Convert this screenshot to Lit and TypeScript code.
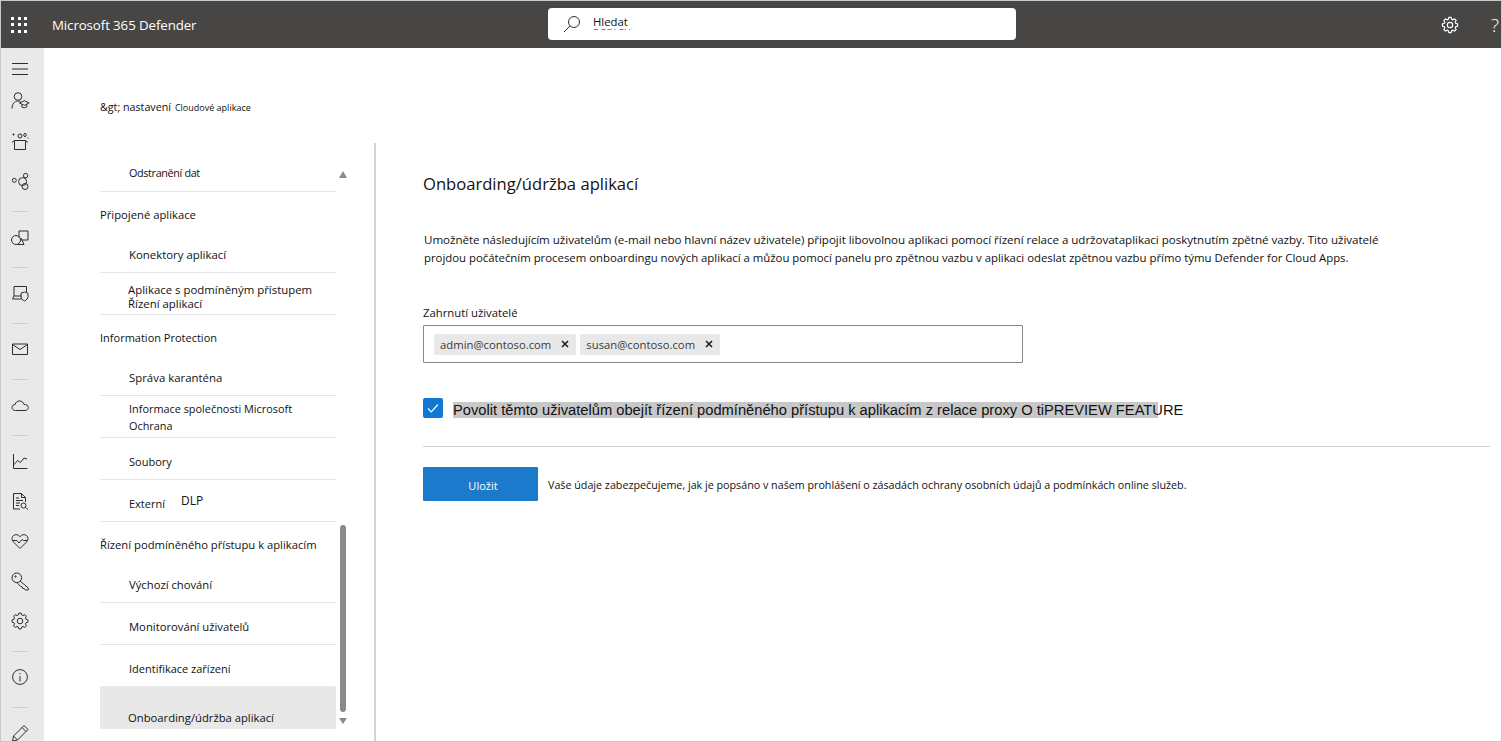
import { LitElement, html, css, svg } from "lit";
import { customElement } from "lit/decorators.js";

function gear(cx: number, cy: number, ro: number, ri: number, n: number) {
  const pts: string[] = [];
  for (let i = 0; i < n; i++) {
    const a = (i / n) * Math.PI * 2;
    const w = (Math.PI / n) * 0.5;
    for (const [r, d] of [[ri, -w * 1.5], [ro, -w * 0.7], [ro, w * 0.7], [ri, w * 1.5]] as number[][]) {
      pts.push(`${(cx + r * Math.cos(a + d)).toFixed(2)} ${(cy + r * Math.sin(a + d)).toFixed(2)}`);
    }
  }
  return "M" + pts.join("L") + "Z";
}

const railIcons: Record<string, unknown> = {
  user: svg`<circle cx="8" cy="5.500" r="3.800"/><path d="M2 17.500c0-4.500 2.500-7.500 6-7.500 1 0 1.800.2 2.500.6"/><path d="M9.500 12l4.800-2.300 4.800 2.300-4.800 2.300z"/><path d="M11.800 13.500v2.500c1.500 1 3.500 1 5 0v-2.500"/>`,
  box: svg`<path d="M4.500 9.500h11v9h-11z"/><path d="M4.500 9.500l-2.500 2M15.500 9.500l2.500 2"/><circle cx="10" cy="5" r="2"/><path d="M2.500 3.500h2M3.500 2.500v2M15 2l1.500 2-1.500 2-1.500-2zM18 6.500v1"/>`,
  graph: svg`<circle cx="4.300" cy="9.300" r="2"/><circle cx="15.600" cy="4.600" r="2.200"/><circle cx="12.600" cy="10.600" r="4"/><circle cx="15" cy="15.500" r="3"/>`,
  shapes: svg`<circle cx="6" cy="13" r="4.500"/><path d="M9 10.500V4h9v9h-6.500"/><path d="M11 11l3 6.500H7.500"/>`,
  laptop: svg`<path d="M4 13V3.500h12.500V9"/><path d="M2.500 16h9M2.500 16l1.500-3h7.500"/><path d="M14.500 9l3.500 1.200v3.300c0 2-1.500 3.500-3.500 4.500-2-1-3.500-2.500-3.500-4.500v-3.300z"/>`,
  mail: svg`<path d="M2.500 5h15v10.500h-15z"/><path d="M2.500 5.500L10 10.500l7.500-5"/>`,
  cloud: svg`<path d="M5.500 15.500c-2 0-3.500-1.300-3.500-3 0-1.800 1.400-3 3.100-3 .5-2.200 2.300-3.600 4.400-3.600 2.300 0 4 1.500 4.500 3.600 2.200-.3 4.300 1 4.300 3 0 1.800-1.500 3-3.300 3z"/>`,
  chart: svg`<path d="M3.500 3v14.500h14"/><path d="M3.500 14l4-4.500 3 2 3.500-4.500 3 1"/>`,
  doc: svg`<path d="M10 18H3.500V2.500h8l4 4V11"/><path d="M11.500 2.500v4h4"/><path d="M6 7h3M6 9.500h7M6 12h4M6 14.500h3"/><circle cx="13.500" cy="14.500" r="2.500"/><path d="M15.500 16.500l2.500 2"/>`,
  heart: svg`<path d="M10 17.500L3.500 11C1.500 9 1.500 6 3.500 4.500c2-1.500 4.800-1 6.500 1.200 1.700-2.200 4.500-2.700 6.500-1.200 2 1.500 2 4.500 0 6.500z"/><path d="M2.500 9.500H7l2 2.500 3-3.500 1.500 1h4"/>`,
  key: svg`<circle cx="6.800" cy="6.800" r="4.800"/><path d="M10.300 10.200l8 6.800v2h-3l-1-1.500h-1.500l-.5-1.500-1.500-.5-3.800-3.700"/><circle cx="5.500" cy="5.500" r=".7"/>`,
  gear: svg`<path d=${gear(10, 10, 8, 6.2, 8)}/><circle cx="10" cy="10" r="2.800"/>`,
  info: svg`<circle cx="10" cy="10" r="7.400"/><path d="M10 9v5.500M10 6v1.200"/>`,
  pencil: svg`<path d="M2.500 18l1-5L14 2.500l4 4L7.500 17z"/><path d="M12 4.500l4 4M3.500 13l4 4"/>`,
};

const rail = ["user", "box", "graph", "|", "shapes", "|", "laptop", "|", "mail", "|", "cloud", "|", "chart", "doc", "heart", "key", "gear", "|", "info", "|", "pencil"];

const nav: [string, string, string[], string?][] = [
  ["item tight", "h50", ["Odstranění dat"]],
  ["head", "h43", ["Připojené aplikace"]],
  ["item big", "h38", ["Konektory aplikací"]],
  ["item two big", "h42", ["Aplikace s podmíněným přístupem", "Řízení aplikací"]],
  ["head plain", "h43", ["Information Protection"]],
  ["item big", "h38", ["Správa karanténa"]],
  ["item wide", "h42", ["Informace společnosti Microsoft", "Ochrana"]],
  ["item plain", "h42", ["Soubory"]],
  ["item plain", "h42", ["Externí"], "DLP"],
  ["head", "h43", ["Řízení podmíněného přístupu k aplikacím"]],
  ["item", "h38", ["Výchozí chování"]],
  ["item", "h42", ["Monitorování uživatelů"]],
  ["item last plain", "h41", ["Identifikace zařízení"]],
  ["item active", "h43", ["Onboarding/údržba aplikací"]],
];

@customElement("app-root")
export class AppRoot extends LitElement {
  static styles = css`
    :host {
      display: flex;
      flex-direction: column;
      width: 1502px;
      height: 742px;
      box-sizing: border-box;
      border: 1px solid #c9c9c9;
      overflow: hidden;
      font-family: "Open Sans", "Liberation Sans", sans-serif;
      color: #111;
      background: #fff;
    }
    .top {
      flex: none;
      height: 47px;
      background: #484644;
      display: flex;
      align-items: center;
      color: #fff;
    }
    .waffle {
      width: 16px;
      height: 16px;
      margin-left: 10px;
      display: grid;
      grid-template-columns: repeat(3, 3px);
      grid-auto-rows: 3px;
      gap: 3.500px;
    }
    .waffle i { background: #fff; }
    .brand {
      margin-left: 25px;
      font-size: 13.300px;
      width: 496px;
      letter-spacing: -0.1px;
    }
    .search {
      width: 468px;
      height: 32px;
      margin-top: -1px;
      background: #fff;
      border-radius: 4px;
      display: flex;
      align-items: center;
      position: relative;
      color: #111;
      overflow: hidden;
    }
    .search svg { margin-left: 14px; }
    .search .q {
      margin-left: 11px;
      font-size: 11.300px;
      position: relative;
      top: -3px;
      background: #fff;
      z-index: 1;
      line-height: 15px;
      padding-right: 6px;
    }
    .ghost {
      position: absolute;
      left: 45px;
      top: 10px;
      font-size: 12px;
      line-height: 15px;
      color: #777;
    }
    .spacer { flex: 1; }
    .cog { margin-right: 32px; display: block; }
    .help {
      font-size: 19px;
      width: 10px;
      line-height: 20px;
      font-weight: 300;
    }
    .main { flex: 1; display: flex; min-height: 0; }
    .rail {
      flex: none;
      width: 43px;
      background: #e9e9e9;
      display: flex;
      flex-direction: column;
      align-items: center;
      padding: 9px 5px 0 0;
      box-sizing: border-box;
      overflow: hidden;
    }
    .rail .slot {
      flex: none;
      height: 40px;
      width: 38px;
      display: flex;
      align-items: center;
      justify-content: center;
    }
    .rail .burger { height: 24px; }
    .rail svg {
      width: 20px;
      height: 20px;
      fill: none;
      stroke: #2f2d2c;
      stroke-width: 1;
    }
    .rail .sep {
      flex: none;
      width: 16px;
      height: 1px;
      background: #cdcdcd;
      margin: 10px 0 5px;
    }
    .page { flex: 1; display: flex; flex-direction: column; min-width: 0; }
    .crumb {
      flex: none;
      height: 95px;
      padding: 51px 0 0 56px;
      box-sizing: border-box;
      font-size: 10.700px;
      line-height: 16px;
      display: flex;
      align-items: baseline;
    }
    .crumb b { font-weight: 400; font-size: 9px; margin-left: 4px; }
    .body { flex: 1; display: flex; min-height: 0; }
    .side {
      flex: none;
      width: 332px;
      display: flex;
      padding-left: 56px;
      box-sizing: border-box;
      border-right: 2px solid #d4d4d4;
    }
    .list { width: 236px; flex: none; margin-top: -1px; }
    .row {
      box-sizing: border-box;
      display: flex;
      flex-direction: column;
      justify-content: flex-end;
      font-size: 11.250px;
      line-height: 14px;
      padding-bottom: 12px;
    }
    .row.plain { font-size: 11px; }
    .row.big { font-size: 11.400px; }
    .row.tight { font-size: 10.800px; letter-spacing: -0.35px; }
    .row.item { padding-left: 29px; border-bottom: 1px solid #e6e6e6; padding-bottom: 10px; }
    .row.tight.item { padding-bottom: 11px; }
    .row.head { padding-bottom: 13px; }
    .row.wide { font-size: 10.900px; line-height: 17px; padding-bottom: 3px; }
    .row.two { padding-bottom: 3px; padding-left: 28px; }
    .row.last { border-bottom: 0; padding-bottom: 10px; }
    .row.active { background: #e8e8e8; border-bottom: 0; border-radius: 2px; padding-left: 28px; padding-bottom: 4px; }
    .h38 { height: 38px; }
    .h41 { height: 41px; }
    .h42 { height: 42px; }
    .h43 { height: 43px; }
    .h50 { height: 50px; }
    .ext { display: flex; align-items: flex-end; }
    .ext em { font-style: normal; font-size: 12px; margin-left: 16px; position: relative; top: -3px; }
    .bar {
      flex: none;
      width: 7px;
      margin-left: 3px;
      display: flex;
      flex-direction: column;
      align-items: center;
      padding-top: 28px;
    }
    .up { width: 0; height: 0; border: 4px solid transparent; border-top: 0; border-bottom: 7px solid #8a8a8a; }
    .down { width: 0; height: 0; border: 4px solid transparent; border-bottom: 0; border-top: 6px solid #8a8a8a; margin-top: 6px; }
    .thumb { width: 6px; height: 187px; border-radius: 3px; background: #8a8a8a; margin-top: 347px; }
    .content { flex: 1; padding-left: 47px; min-width: 0; padding-right: 11px; }
    h1 { margin: 29px 0 0; font-size: 16.600px; font-weight: 400; line-height: 24px; }
    .desc { margin: 35px 0 0 1px; line-height: 18px; white-space: nowrap; }
    .desc span { display: block; }
    .desc .l1 { font-size: 11.600px; letter-spacing: -0.04px; }
    .desc .l2 { font-size: 11.380px; letter-spacing: -0.01px; }
    label { display: block; margin-top: 38px; font-size: 11.300px; line-height: 16px; }
    .box {
      margin-top: 4px;
      width: 600px;
      height: 38px;
      box-sizing: border-box;
      border: 1px solid #8a8886;
      border-radius: 1px;
      display: flex;
      align-items: center;
      gap: 4px;
      padding-left: 10px;
    }
    .chip {
      height: 21px;
      background: #e8e8e8;
      border-radius: 2px;
      display: flex;
      align-items: center;
      padding: 0 7px 0 6px;
      font-size: 11.300px;
      color: #3b3a39;
    }
    .chip span { flex: 1; }
    .chip svg { margin-left: 10px; }
    .chk { display: flex; align-items: center; margin-top: 35px; height: 20px; }
    .tick {
      width: 20px;
      height: 20px;
      background: #0f78d4;
      border-radius: 2px;
      display: flex;
      align-items: center;
      justify-content: center;
      flex: none;
    }
    .chk p { margin: 0 0 0 10px; font-family: "Liberation Sans", Arial, sans-serif; font-size: 14.700px; line-height: 19px; position: relative; top: 2px; white-space: nowrap; }
    .chk mark { background: #c8c8c8; color: inherit; }
    .chk .u { background: linear-gradient(to right, #c8c8c8 50%, transparent 50%); }
    hr { border: 0; height: 1px; background: #d2d2d2; margin: 28px 0 20px; }
    .save { display: flex; align-items: center; }
    .btn { width: 115px; height: 34px; background: #1b7acb; color: #fff; border: 0; border-radius: 1px; font: inherit; font-size: 11px; padding: 2px 0 0 5px; }
    .save span { margin-left: 10px; font-size: 10.720px; padding-top: 2px; }
  `;

  render() {
    return html`
      <div class="top">
        <div class="waffle">${Array.from({ length: 9 }, () => html`<i></i>`)}</div>
        <div class="brand">Microsoft 365 Defender</div>
        <div class="search">
          <svg width="20" height="20" viewBox="0 0 20 20" fill="none" stroke="#323130" stroke-width="1"><circle cx="12" cy="8" r="5.500"/><path d="M8 12l-6 6"/></svg>
          <span class="ghost">Search</span>
          <span class="q">Hledat</span>
        </div>
        <div class="spacer"></div>
        <svg class="cog" width="18" height="18" viewBox="0 0 20 20" fill="none" stroke="#fff" stroke-width="1.300"><path d=${gear(10, 10, 8.5, 6.6, 8)}/><circle cx="10" cy="10" r="3"/></svg>
        <div class="help">?</div>
      </div>
      <div class="main">
        <div class="rail">
          <div class="slot burger"><svg viewBox="0 0 20 20"><path d="M2 4.500h16M2 10h16M2 15.500h16"/></svg></div>
          ${rail.map((r) =>
            r === "|"
              ? html`<div class="sep"></div>`
              : html`<div class="slot"><svg viewBox="0 0 20 20">${railIcons[r]}</svg></div>`
          )}
        </div>
        <div class="page">
          <div class="crumb">&amp;gt; nastavení <b>Cloudové aplikace</b></div>
          <div class="body">
            <div class="side">
              <div class="list">
                ${nav.map(
                  ([k, h, lines, extra]) => html`<div class="row ${k} ${h}">
                    ${extra
                      ? html`<div class="ext"><span>${lines[0]}</span><em>${extra}</em></div>`
                      : lines.map((l) => html`<div>${l}</div>`)}
                  </div>`
                )}
              </div>
              <div class="bar">
                <div class="up"></div>
                <div class="thumb"></div>
                <div class="down"></div>
              </div>
            </div>
            <div class="content">
              <h1>Onboarding/údržba aplikací</h1>
              <p class="desc"><span class="l1">Umožněte následujícím uživatelům (e-mail nebo hlavní název uživatele) připojit libovolnou aplikaci pomocí řízení relace a udržovataplikaci poskytnutím zpětné vazby. Tito uživatelé</span><span class="l2">projdou počátečním procesem onboardingu nových aplikací a můžou pomocí panelu pro zpětnou vazbu v aplikaci odeslat zpětnou vazbu přímo týmu Defender for Cloud Apps.</span></p>
              <label>Zahrnutí uživatelé</label>
              <div class="box">
                ${["admin@contoso.com", "susan@contoso.com"].map(
                  (m) => html`<div class="chip"><span>${m}</span><svg width="8" height="8" viewBox="0 0 8 8" stroke="#201f1e" stroke-width="1.600"><path d="M1 1l6 6M7 1L1 7"/></svg></div>`
                )}
              </div>
              <div class="chk">
                <div class="tick"><svg width="14" height="14" viewBox="0 0 14 14" fill="none" stroke="#fff" stroke-width="1.200"><path d="M2 7.500l3.300 3.300L12 3.500"/></svg></div>
                <p><mark>Povolit těmto uživatelům obejít řízení podmíněného přístupu k aplikacím z relace proxy O tiPREVIEW FEAT</mark><span class="u">U</span>RE</p>
              </div>
              <hr />
              <div class="save">
                <button class="btn">Uložit</button>
                <span>Vaše údaje zabezpečujeme, jak je popsáno v našem prohlášení o zásadách ochrany osobních údajů a podmínkách online služeb.</span>
              </div>
            </div>
          </div>
        </div>
      </div>
    `;
  }
}
